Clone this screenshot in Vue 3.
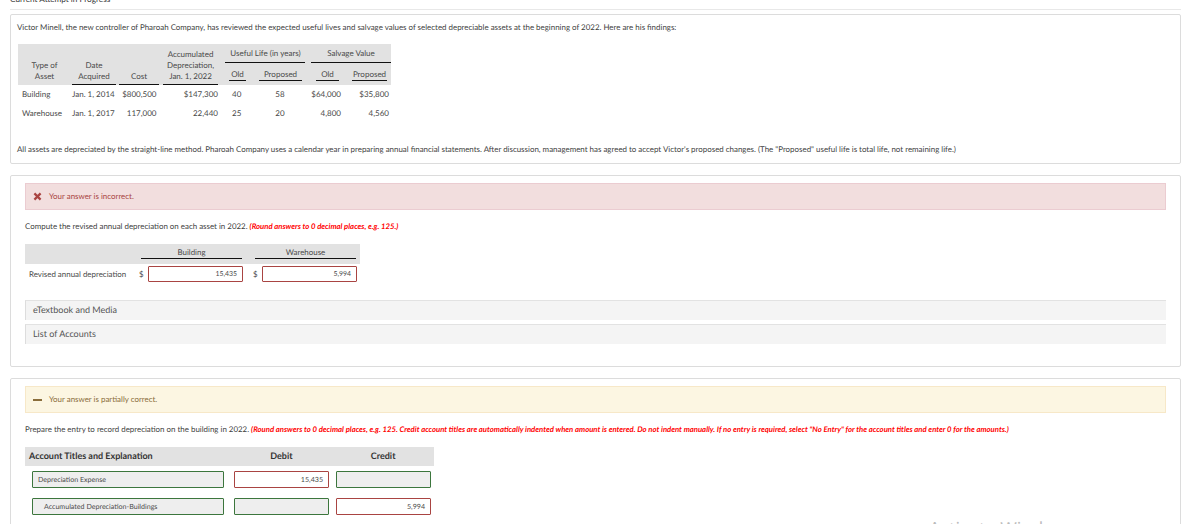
<template>
  <div class="page">
    <div class="attempt"><span>Current Attempt in Progress</span></div>

    <section class="card intro">
      <p class="para">Victor Minell, the new controller of Pharoah Company, has reviewed the expected useful lives and salvage values of selected depreciable assets at the beginning of 2022. Here are his findings:</p>

      <table class="assets">
        <colgroup>
          <col style="width:53px" /><col style="width:46px" /><col style="width:44px" /><col style="width:59px" />
          <col style="width:35px" /><col style="width:50px" /><col style="width:45px" /><col style="width:41px" />
        </colgroup>
        <thead>
          <tr class="top-row">
            <th rowspan="2" class="low"><span class="ul plain">Type of<br />Asset</span></th>
            <th rowspan="2" class="low"><span class="ul m-date">Date<br />Acquired</span></th>
            <th rowspan="2" class="low"><span class="ul m-cost">Cost</span></th>
            <th rowspan="2" class="low"><span class="ul m-cost">Accumulated<br />Depreciation,<br />Jan. 1, 2022</span></th>
            <th colspan="2" class="group"><div class="life">Useful Life (in years)</div></th>
            <th colspan="2" class="group"><div class="salvage">Salvage Value</div></th>
          </tr>
          <tr class="sub-row">
            <th class="low"><span class="sub m-old">Old</span></th>
            <th class="low"><span class="sub m-prop">Proposed</span></th>
            <th class="low"><span class="sub m-sold">Old</span></th>
            <th class="low"><span class="sub m-sprop">Proposed</span></th>
          </tr>
        </thead>
        <tbody>
          <tr v-for="a in assets" :key="a.name">
            <td class="name">{{ a.name }}</td>
            <td class="date">{{ a.date }}</td>
            <td class="num cost">{{ a.cost }}</td>
            <td class="num">{{ a.accum }}</td>
            <td class="old-life">{{ a.oldLife }}</td>
            <td class="mid">{{ a.newLife }}</td>
            <td class="num salv">{{ a.oldSalv }}</td>
            <td class="num">{{ a.newSalv }}</td>
          </tr>
        </tbody>
      </table>

      <p class="para after">All assets are depreciated by the straight-line method. Pharoah Company uses a calendar year in preparing annual financial statements. After discussion, management has agreed to accept Victor's proposed changes. (The "Proposed" useful life is total life, not remaining life.)</p>
    </section>

    <section class="card part part-a">
      <div class="banner wrong">
        <svg class="icon" width="9" height="9" viewBox="0 0 9 9"><path d="M1.4 1.4 7.6 7.6M7.6 1.4 1.4 7.6" stroke="#a94442" stroke-width="2.2" fill="none" /></svg>
        <span>Your answer is incorrect.</span>
      </div>
      <p class="para ask">Compute the revised annual depreciation on each asset in 2022. <em>(Round answers to 0 decimal places, e.g. 125.)</em></p>

      <div class="revised">
        <div class="rev-head">
          <span class="rev-title">Building</span>
          <span class="rev-title second">Warehouse</span>
        </div>
        <div class="rev-row">
          <span class="rev-label">Revised annual depreciation</span>
          <span class="dollar">$</span>
          <span class="box bad rev-box">15,435</span>
          <span class="dollar next">$</span>
          <span class="box bad rev-box">5,994</span>
        </div>
      </div>

      <div class="bar first-bar">eTextbook and Media</div>
      <div class="bar">List of Accounts</div>
    </section>

    <section class="card part part-b">
      <div class="banner partial">
        <span class="dash"></span>
        <span>Your answer is partially correct.</span>
      </div>
      <p class="para ask">Prepare the entry to record depreciation on the building in 2022. <em>(Round answers to 0 decimal places, e.g. 125. Credit account titles are automatically indented when amount is entered. Do not indent manually. If no entry is required, select "No Entry" for the account titles and enter 0 for the amounts.)</em></p>

      <div class="journal">
        <div class="j-head">
          <span class="j-acct">Account Titles and Explanation</span>
          <span class="j-amt">Debit</span>
          <span class="j-amt">Credit</span>
        </div>
        <div class="j-row" v-for="r in entries" :key="r.title">
          <span class="box good acct" :class="{ indent: r.indent }">{{ r.title }}</span>
          <span class="box amt" :class="r.debit ? 'bad' : 'good'">{{ r.debit }}</span>
          <span class="box amt" :class="r.credit ? 'bad' : 'good'">{{ r.credit }}</span>
        </div>
      </div>
    </section>

    <div class="watermark">Activate Windows</div>
  </div>
</template>

<script setup>
const assets = [
  { name: 'Building', date: 'Jan. 1, 2014', cost: '$800,500', accum: '$147,300', oldLife: '40', newLife: '58', oldSalv: '$64,000', newSalv: '$35,800' },
  { name: 'Warehouse', date: 'Jan. 1, 2017', cost: '117,000', accum: '22,440', oldLife: '25', newLife: '20', oldSalv: '4,800', newSalv: '4,560' }
]

const entries = [
  { title: 'Depreciation Expense', debit: '15,435', credit: '', indent: false },
  { title: 'Accumulated Depreciation-Buildings', debit: '', credit: '5,994', indent: true }
]
</script>

<style>
html, body { margin: 0; overflow: hidden; background: #fff; }
</style>

<style scoped>
.page {
  position: relative;
  width: 1190px;
  height: 524px;
  overflow: hidden;
  box-sizing: border-box;
  padding: 0 9px 0 10px;
  font-family: Lato, "Liberation Sans", sans-serif;
  font-size: 7.93px;
  line-height: 11px;
  color: #4a4a4a;
  text-rendering: geometricPrecision;
}
.attempt {
  height: 9px;
  border-bottom: 1px solid #e8e8e8;
  margin-bottom: 4px;
  font-size: 8.2px;
  line-height: 0;
  color: #333;
  overflow: hidden;
}
.attempt span { display: block; margin-top: -1px; }
.card {
  border: 1px solid #dcdcdc;
  border-radius: 2px;
  box-sizing: border-box;
  background: #fff;
}
.intro { height: 150px; padding: 7px 6px 0 6px; }
.para { margin: 0; color: #3f3f3f; white-space: nowrap; }
.after { margin-top: 21px; }

.assets {
  margin: 11px 0 0 1px;
  border-collapse: collapse;
  table-layout: fixed;
  width: 373px;
  font-size: 8px;
}
.assets th {
  background: #e2e2e2;
  font-weight: 400;
  padding: 0;
  text-align: center;
  line-height: 11px;
}
.top-row { height: 21px; }
.sub-row { height: 20px; }
.assets th.low { vertical-align: bottom; }
.assets th.group { vertical-align: top; padding-top: 4px; }
.group div {
  padding-bottom: 3px;
  border-bottom: 1px solid #111;
}
.life { margin: 0 -1px 0 5px; }
.salvage { margin: 0 0 0 6px; }
.ul {
  display: block;
  padding-bottom: 2px;
  border-bottom: 1px solid #111;
}
.ul.plain { border-bottom-color: transparent; }
.m-date { margin: 0 1px; }
.m-cost { margin: 0 2px; }
.sub {
  display: block;
  margin-bottom: 4px;
  border-bottom: 1px solid #111;
}
.m-old { margin-left: 9px; margin-right: 9px; }
.m-prop { margin-left: 4px; margin-right: 3px; }
.m-sold { margin-left: 11px; margin-right: 11px; }
.m-sprop { margin-left: 2px; margin-right: 4px; }
.assets td { padding: 0; height: 19px; line-height: 19px; white-space: nowrap; }
.assets .name { padding-left: 4px; }
.assets .date { padding-left: 1px; }
.assets .num { text-align: right; padding-right: 2px; }
.assets .cost { padding-right: 4.5px; }
.assets .salv { padding-right: 9px; }
.assets .old-life { padding-left: 12px; }
.assets .mid { text-align: center; }

.part { padding: 7px 14px 0 14px; }
.part-a { height: 192px; margin-top: 11px; }
.part-b { height: 160px; margin-top: 11px; }

.banner {
  height: 27px;
  box-sizing: border-box;
  display: flex;
  align-items: center;
  padding-left: 7px;
  gap: 7px;
}
.wrong { background: #f2dede; border: 1px solid #ebccd1; color: #a94442; }
.partial { background: #fcf6e2; border: 1px solid #f7e8c8; color: #8a6d3b; }
.icon { flex: none; }
.dash { width: 9px; height: 2px; background: #8a6d3b; flex: none; }

.ask { margin-top: 11px; }
.ask em { color: #f00; font-weight: 700; font-style: italic; font-size: 7.72px; }

.revised { margin-top: 12px; width: 335px; }
.rev-head {
  display: flex;
  height: 20px;
  background: #e2e2e2;
  padding-left: 116px;
}
.rev-title {
  width: 101px;
  height: 14px;
  line-height: 17px;
  text-align: center;
  border-bottom: 1px solid #111;
}
.rev-title.second { margin-left: 13px; }
.rev-row { display: flex; align-items: center; margin-top: 2px; }
.rev-label { width: 113px; padding-left: 4px; box-sizing: border-box; }
.dollar { width: 10px; padding-left: 1px; box-sizing: border-box; }
.dollar.next { width: 19px; padding-left: 10px; }

.box {
  display: block;
  box-sizing: border-box;
  height: 16px;
  line-height: 14px;
  font-size: 7.1px;
  border-radius: 1px;
  white-space: nowrap;
}
.bad { border: 1px solid #a94442; background: #fff; text-align: right; padding-right: 5px; }
.good { border: 1px solid #3c763d; background: #eee; }
.rev-box { width: 95px; font-size: 6.9px; }

.bar {
  height: 20px;
  margin-top: 4px;
  padding-left: 7px;
  background: #f4f4f4;
  border-left: 1px solid #ddd;
  border-top: 1px solid #e2e2e2;
  box-sizing: border-box;
  line-height: 18px;
  font-size: 9px;
  color: #555;
}
.first-bar { margin-top: 18px; }

.journal { margin-top: 12px; width: 409px; }
.j-head {
  display: flex;
  height: 19px;
  background: #e2e2e2;
  line-height: 17px;
  font-weight: 700;
  font-size: 9px;
  color: #333;
}
.j-acct { width: 206px; padding-left: 4px; box-sizing: border-box; }
.j-amt { width: 102px; text-align: center; }
.j-row { display: flex; padding-left: 7px; gap: 10px; margin-top: 5px; height: 17px; }
.j-row + .j-row { margin-top: 10px; }
.j-row .box { height: 17px; line-height: 15px; }
.acct { width: 192px; padding-left: 5px; }
.acct.indent { padding-left: 11px; }
.amt { width: 95px; }
.j-row .amt:last-child { margin-left: -3px; }

.watermark {
  position: absolute;
  left: 929px;
  top: 516px;
  font-family: "Open Sans", sans-serif;
  font-size: 18px;
  line-height: 27px;
  color: #bbb;
  white-space: nowrap;
}
</style>
